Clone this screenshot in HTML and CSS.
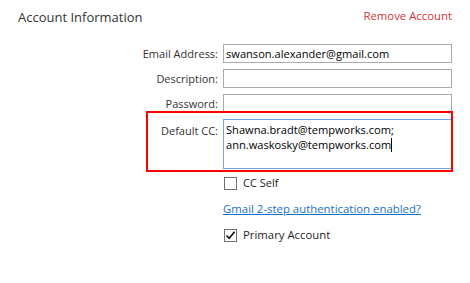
FILE: index.html
```html
<!DOCTYPE html>
<html>
<head>
<meta charset="utf-8">
<link rel="stylesheet" href="styles.css">
</head>
<body>
<div class="panel">
  <div class="header">
    <h2 class="title">Account Information</h2>
    <a class="remove">Remove Account</a>
  </div>
  <div class="form">
    <div class="label">Email Address:</div>
    <div class="input">swanson.alexander@gmail.com</div>

    <div class="label">Description:</div>
    <div class="input"></div>

    <div class="label">Password:</div>
    <div class="input"></div>

    <div class="label label-top">Default CC:</div>
    <div class="textarea">Shawna.bradt@tempworks.com;<br>ann.waskosky@tempworks.com<span class="caret"></span></div>

    <div class="spacer"></div>
    <div class="check"><span class="box"></span><span>CC Self</span></div>

    <div class="spacer"></div>
    <a class="link">Gmail 2-step authentication enabled?</a>

    <div class="spacer"></div>
    <div class="check check-last"><span class="box checked"><svg width="11" height="11" viewBox="0 0 11 11"><path d="M1.5 5.5 L4.2 8.3 L9.6 1.8" fill="none" stroke="#111" stroke-width="1.7"/></svg></span><span>Primary Account</span></div>

    <div class="highlight"></div>
  </div>
</div>
</body>
</html>
```

FILE: styles.css
```css
html, body {
  margin: 0;
  padding: 0;
  background: #ffffff;
}
body {
  font-family: "Open Sans", "Noto Sans", sans-serif;
  font-size: 11.3px;
  color: #1e1e1e;
  width: 470px;
  height: 283px;
  overflow: hidden;
}
.panel {
  position: relative;
}
.header {
  display: flex;
  justify-content: space-between;
  align-items: flex-start;
  height: 44px;
  padding: 0 18px;
}
.title {
  margin: 7px 0 0 0;
  font-size: 13px;
  font-weight: normal;
  color: #333333;
  line-height: 20px;
}
.remove {
  margin-top: 7px;
  color: #d13438;
  font-size: 11.35px;
  line-height: 18px;
}
.form {
  position: relative;
  display: grid;
  grid-template-columns: 218px 229px;
  column-gap: 5px;
  row-gap: 6px;
  align-items: center;
}
.label {
  text-align: right;
  color: #333333;
  font-size: 11px;
  line-height: 19px;
}
.label-top {
  align-self: start;
  padding-top: 2px;
}
.input {
  box-sizing: border-box;
  height: 19px;
  border: 1px solid #ababab;
  padding: 0 2px;
  font-size: 11.1px;
  line-height: 17px;
  color: #000;
  white-space: nowrap;
  overflow: hidden;
}
.textarea {
  box-sizing: border-box;
  height: 50px;
  border: 1px solid #6fa6dc;
  padding: 2px 2px;
  font-size: 11.1px;
  line-height: 15px;
  color: #000;
  white-space: nowrap;
}
.caret {
  display: inline-block;
  width: 1px;
  height: 14px;
  background: #000;
  vertical-align: -3px;
}
.spacer {
  height: 1px;
}
.check {
  display: flex;
  align-items: center;
  gap: 6px;
  margin-left: 1px;
  font-size: 11px;
  line-height: 16px;
  color: #1e1e1e;
}
.check-last {
  margin-top: 4px;
  font-size: 11.35px;
}
.box {
  box-sizing: border-box;
  width: 13px;
  height: 13px;
  border: 1px solid #707070;
  background: #fff;
  display: flex;
  align-items: center;
  justify-content: center;
}
.link {
  margin-top: 4px;
  color: #1a6fc9;
  font-size: 11.4px;
  text-decoration: underline;
  line-height: 16px;
}
.highlight {
  position: absolute;
  left: 146px;
  top: 67px;
  width: 307px;
  height: 61px;
  box-sizing: border-box;
  border: 2px solid #ff0000;
  pointer-events: none;
}
```
